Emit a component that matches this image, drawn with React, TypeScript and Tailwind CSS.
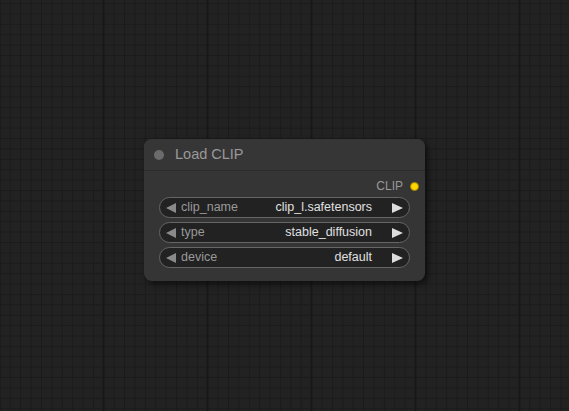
import React from 'react';

interface Widget {
  name: string;
  value: string;
}

const widgets: Widget[] = [
  { name: 'clip_name', value: 'clip_l.safetensors' },
  { name: 'type', value: 'stable_diffusion' },
  { name: 'device', value: 'default' },
];

function ComboWidget({ name, value }: Widget) {
  return (
    <div className="flex h-[21px] w-full items-center rounded-full border border-[#666] bg-[#222] pl-[6px] pr-[6px] text-[12.5px] leading-none">
      <svg width="10" height="10" viewBox="0 0 10 10" className="shrink-0">
        <polygon points="0,5 10,0 10,10" fill="#8a8a8a" />
      </svg>
      <span className="ml-[5px] text-[#999]">{name}</span>
      <span className="flex-1" />
      <span className="text-[#e0e0e0]">{value}</span>
      <svg width="11" height="10" viewBox="0 0 11 10" className="ml-[20px] shrink-0">
        <polygon points="0,0 11,5 0,10" fill="#ddd" />
      </svg>
    </div>
  );
}

function LoadClipNode() {
  return (
    <div className="absolute left-[144px] top-[139px] w-[281px] h-[142px] rounded-[8px] bg-[#353535] shadow-[3px_3px_6px_rgba(0,0,0,0.55)]">
      {/* title */}
      <div className="flex h-[32px] items-center border-b border-[#2c2c2c] bg-[#363636] rounded-t-[8px] pl-[10px]">
        <div className="h-[10px] w-[10px] rounded-full bg-[#6b6b6b]" />
        <span className="ml-[11px] text-[14.5px] leading-none text-[#999]">Load CLIP</span>
      </div>

      {/* outputs */}
      <div className="flex h-[26px] items-center justify-end pr-[6px] pt-[4px]">
        <span className="text-[12px] leading-none text-[#999]">CLIP</span>
        <div className="ml-[7px] h-[9px] w-[9px] rounded-full bg-[#ffd500] border border-[#a08400]" />
      </div>

      {/* widgets */}
      <div className="flex flex-col gap-[4px] px-[15px]">
        {widgets.map((w) => (
          <ComboWidget key={w.name} {...w} />
        ))}
      </div>
    </div>
  );
}

export default function App() {
  return (
    <div
      className="relative h-[411px] w-[569px] overflow-hidden bg-[#222222] font-['Liberation_Sans',Arial,sans-serif] [background-image:linear-gradient(to_right,#181818_2px,transparent_2px),linear-gradient(to_right,#1b1b1b_1px,transparent_1px),linear-gradient(to_bottom,#1b1b1b_1px,transparent_1px)] [background-size:104px_100%,10.4px_10.4px,10.4px_10.4px] [background-position:102.5px_0,9.8px_0,0_3px]"
    >
      <LoadClipNode />
    </div>
  );
}
